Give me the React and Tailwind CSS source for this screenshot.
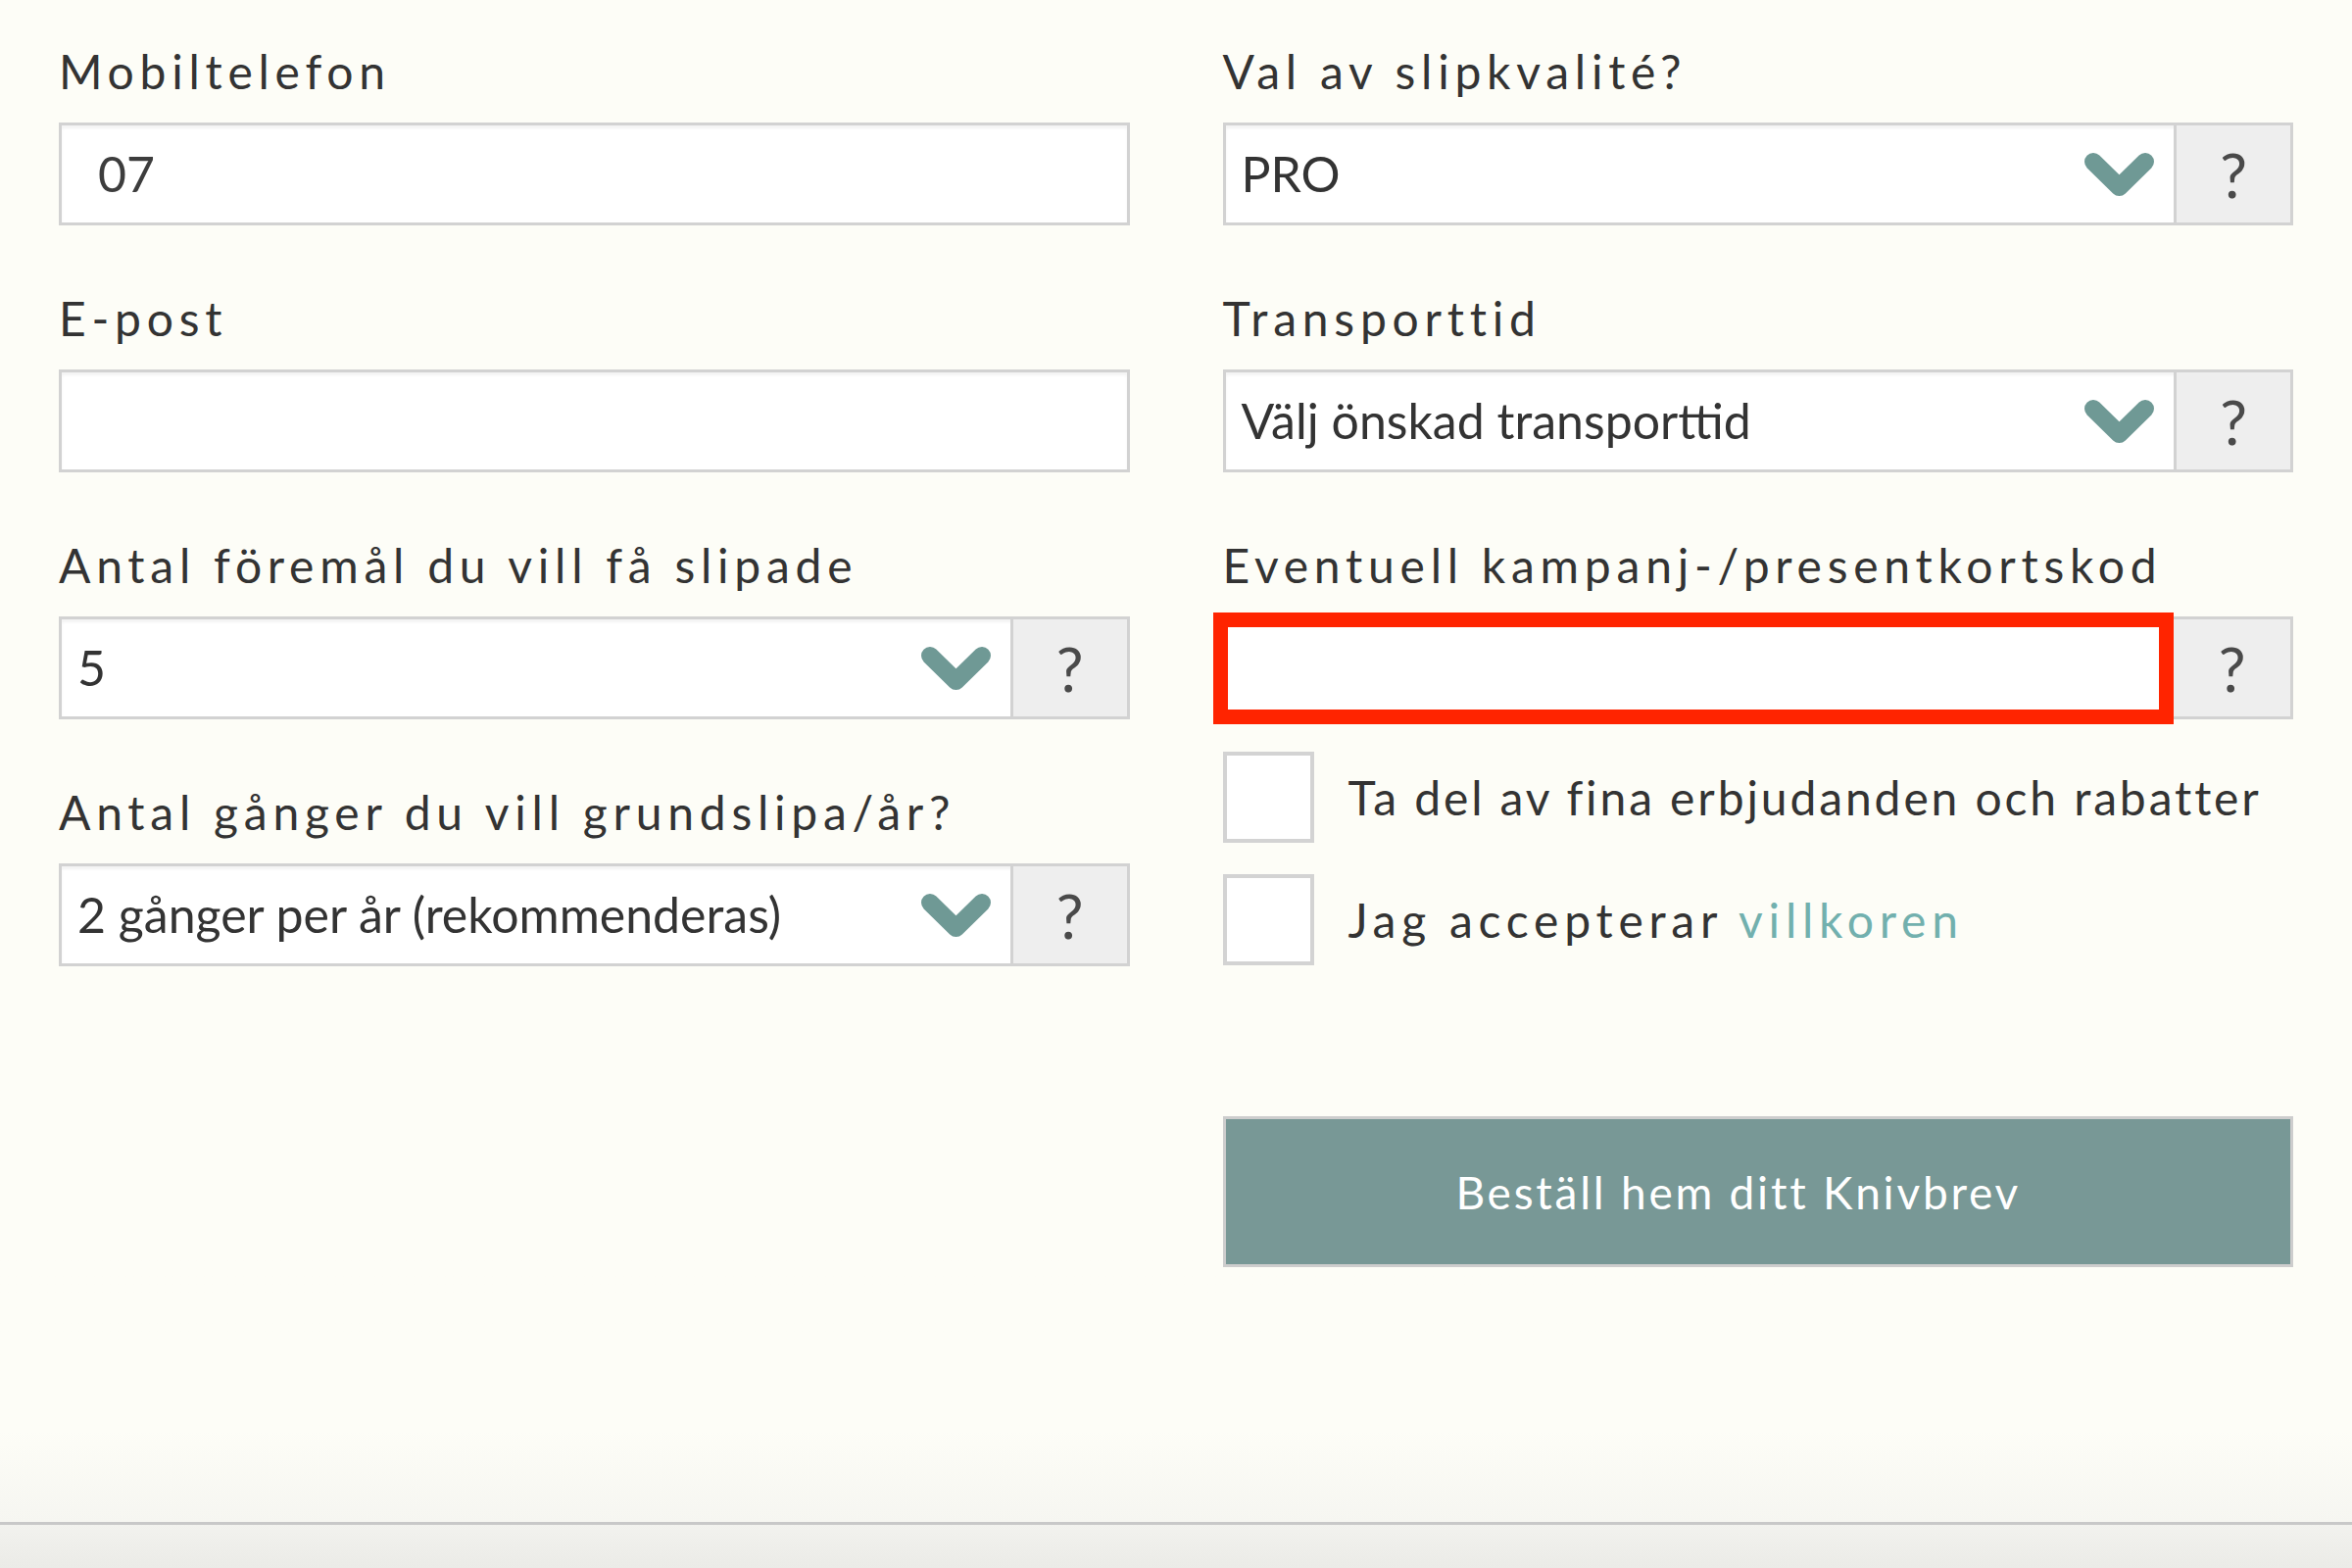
import { Fragment } from 'react';

const Chevron = () => (
  <svg width="71" height="44" viewBox="0 0 71 44" className="shrink-0">
    <polyline
      points="9,9 35.5,35 62,9"
      fill="none"
      stroke="#6f9995"
      strokeWidth="18"
      strokeLinecap="round"
      strokeLinejoin="round"
    />
  </svg>
);

const HelpButton = () => (
  <div className="w-[119px] shrink-0 self-stretch border-l-[3px] border-[#d2d2d2] bg-[#eeeeee] flex items-center justify-center text-[62px] leading-none text-[#4a4a4a]">
    ?
  </div>
);

const Label = ({ children }) => (
  <label className="block h-[48px] text-[48px] leading-[48px] tracking-[0.12em] text-[#333333] whitespace-nowrap">
    {children}
  </label>
);

const TextField = ({ label, value, className = 'mb-[71px]' }) => (
  <div className={className}>
    <Label>{label}</Label>
    <div className="mt-[28px] h-[105px] border-[3px] border-[#d2d2d2] bg-white shadow-[inset_0_3px_3px_rgba(0,0,0,0.05)] flex items-center pl-[37px] text-[50px] text-[#3d3d3d]">
      {value}
    </div>
  </div>
);

const SelectField = ({ label, value, className = 'mb-[71px]' }) => (
  <div className={className}>
    <Label>{label}</Label>
    <div className="mt-[28px] h-[105px] border-[3px] border-[#d2d2d2] bg-white shadow-[inset_0_3px_3px_rgba(0,0,0,0.05)] flex items-center">
      <div className="flex-1 flex items-center justify-between pl-[16px] pr-[20px] text-[50px] text-[#333333] whitespace-nowrap">
        <span>{value}</span>
        <Chevron />
      </div>
      <HelpButton />
    </div>
  </div>
);

const CodeField = ({ label, className }) => (
  <div className={className}>
    <Label>{label}</Label>
    <div className="mt-[28px] h-[105px] flex items-center">
      <div className="-ml-[10px] h-[114px] flex-1 border-[15px] border-[#ff2400] bg-white" />
      <div className="h-[105px] w-[122px] border-[3px] border-l-0 border-[#d2d2d2] bg-[#eeeeee] flex items-center justify-center text-[62px] leading-none text-[#4a4a4a]">
        ?
      </div>
    </div>
  </div>
);

const Checkbox = ({ children, tracking = 'tracking-[0.12em]' }) => (
  <div className="flex items-center h-[93px]">
    <div className="w-[93px] h-[93px] shrink-0 border-[4px] border-[#d3d3d3] bg-white" />
    <span className={`ml-[35px] text-[48px] text-[#333333] whitespace-nowrap ${tracking}`}>
      {children}
    </span>
  </div>
);

export default function App() {
  return (
    <div className="h-[1600px] flex flex-col bg-[#fdfdf7] font-['Lato',sans-serif] overflow-hidden">
      <div className="h-[1553px] shrink-0 px-[60px] pt-[49px] grid grid-cols-2 gap-x-[95px] items-start bg-linear-to-b from-[#fdfdf7] from-[94%] to-[#f6f6f1]">
        {/* Left column */}
        <div className="flex flex-col">
          <TextField label="Mobiltelefon" value="07" />
          <TextField label="E-post" value="" />
          <SelectField label="Antal föremål du vill få slipade" value="5" />
          <SelectField label="Antal gånger du vill grundslipa/år?" value="2 gånger per år (rekommenderas)" />
        </div>

        {/* Right column */}
        <div className="flex flex-col">
          <SelectField label="Val av slipkvalité?" value="PRO" />
          <SelectField label="Transporttid" value="Välj önskad transporttid" />
          <CodeField label="Eventuell kampanj-/presentkortskod" className="mb-[33px]" />
          <div className="flex flex-col gap-[32px]">
            <Checkbox tracking="tracking-[0.06em]">Ta del av fina erbjudanden och rabatter</Checkbox>
            <Checkbox>
              <Fragment>
                Jag accepterar <span className="text-[#72b0ae]">villkoren</span>
              </Fragment>
            </Checkbox>
          </div>
          <button className="mt-[154px] h-[154px] w-full border-[3px] border-[#cdcdcd] bg-[#789896] text-white text-[46px] tracking-[0.06em] pr-[40px]">
            Beställ hem ditt Knivbrev
          </button>
        </div>
      </div>

      {/* Bottom bar */}
      <div className="flex-1 border-t-[3px] border-[#c8c8c8] bg-linear-to-b from-[#f2f2ee] to-[#ebebe7]" />
    </div>
  );
}
